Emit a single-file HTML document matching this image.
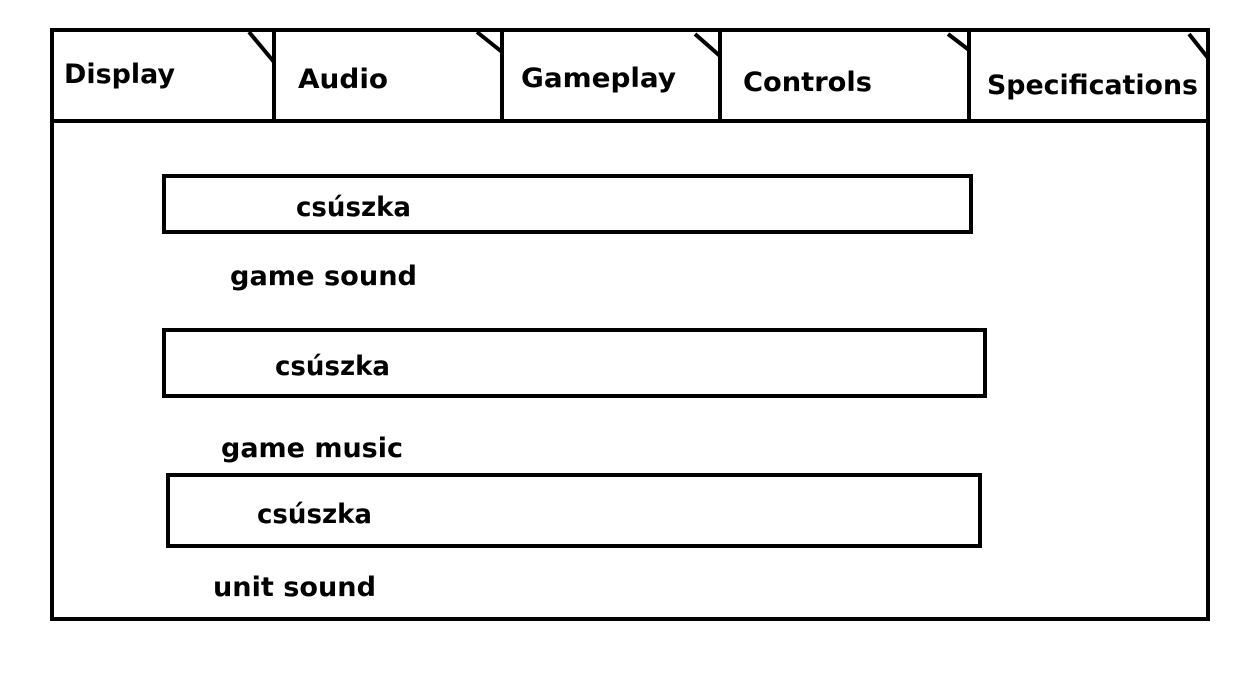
<!DOCTYPE html>
<html><head><meta charset="utf-8"><style>html,body{margin:0;padding:0;background:#fff;width:1257px;height:700px;overflow:hidden}</style></head>
<body>
<svg width="1257" height="700" viewBox="0 0 1257 700" xmlns="http://www.w3.org/2000/svg">
<g fill="none" stroke="#000" stroke-width="4">
<rect x="52" y="30" width="1156" height="589"/>
<line x1="52" y1="121" x2="1208" y2="121"/>
<line x1="274" y1="30" x2="274" y2="123"/>
<line x1="502" y1="30" x2="502" y2="123"/>
<line x1="720" y1="30" x2="720" y2="123"/>
<line x1="969" y1="30" x2="969" y2="123"/>
<line x1="249" y1="32" x2="274" y2="62"/>
<line x1="477" y1="32" x2="502" y2="52"/>
<line x1="695" y1="34" x2="720" y2="56"/>
<line x1="948" y1="34" x2="969" y2="50"/>
<line x1="1189" y1="34" x2="1208" y2="58"/>
<rect x="164" y="176" width="807" height="56"/>
<rect x="164" y="330" width="821" height="66"/>
<rect x="168" y="475" width="812" height="71"/>
</g>
<g font-family="DejaVu Sans, sans-serif" font-weight="bold" font-size="27" fill="#000">
<text x="64" y="83" textLength="111" lengthAdjust="spacingAndGlyphs">Display</text>
<text x="298" y="88" textLength="90" lengthAdjust="spacingAndGlyphs">Audio</text>
<text x="521" y="87" textLength="155" lengthAdjust="spacingAndGlyphs">Gameplay</text>
<text x="743" y="91" textLength="129" lengthAdjust="spacingAndGlyphs">Controls</text>
<text x="987" y="94" textLength="211" lengthAdjust="spacingAndGlyphs">Specifications</text>
<text x="296" y="216" textLength="115" lengthAdjust="spacingAndGlyphs">csúszka</text>
<text x="230" y="285" textLength="187" lengthAdjust="spacingAndGlyphs">game sound</text>
<text x="275" y="375" textLength="115" lengthAdjust="spacingAndGlyphs">csúszka</text>
<text x="221" y="457" textLength="182" lengthAdjust="spacingAndGlyphs">game music</text>
<text x="257" y="523" textLength="115" lengthAdjust="spacingAndGlyphs">csúszka</text>
<text x="213" y="596" textLength="163" lengthAdjust="spacingAndGlyphs">unit sound</text>
</g>
</svg>
</body></html>
